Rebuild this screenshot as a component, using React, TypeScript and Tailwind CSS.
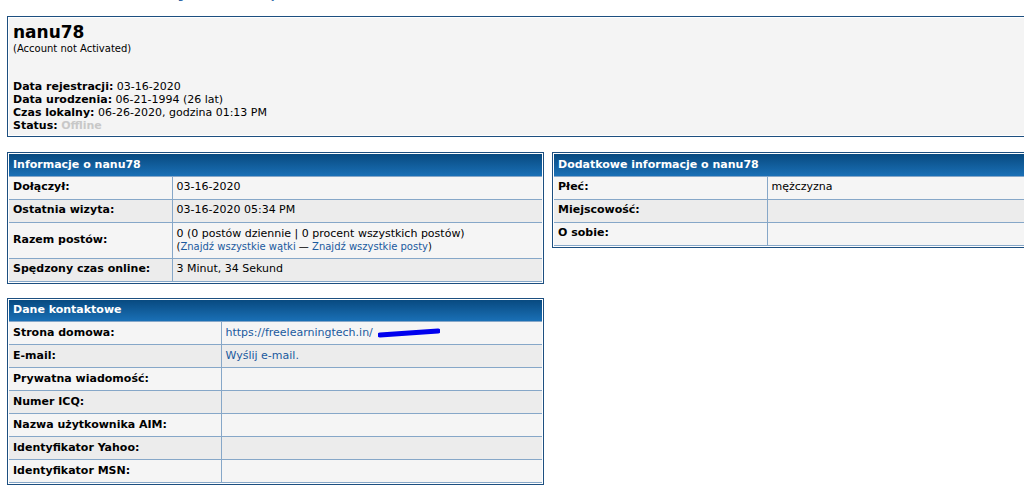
import React from 'react';

const font = { fontFamily: 'Tahoma, "DejaVu Sans", Verdana, sans-serif' };

interface Row {
  label: string;
  value?: React.ReactNode;
  tall?: boolean;
}

function InfoTable({ title, rows, labelWidth, className }: { title: string; rows: Row[]; labelWidth: string; className: string }) {
  return (
    <div className={`border border-[#1d4f80] p-px bg-white ${className}`}>
      <table className="w-full border-collapse text-[11px] text-black">
        <thead>
          <tr>
            <th
              colSpan={2}
              className="h-[22px] text-left font-bold text-white px-[4px] bg-gradient-to-b from-[#084a80] to-[#1a70b6] border-b border-[#86a7c8]"
            >
              {title}
            </th>
          </tr>
        </thead>
        <tbody>
          {rows.map((r, i) => (
            <tr key={r.label} className={i % 2 === 0 ? 'bg-[#f5f5f5]' : 'bg-[#ececec]'}>
              <td
                className={`${labelWidth} font-bold px-[4px] border-r border-b border-[#86a7c8] ${r.tall ? 'h-[36px]' : 'h-[23px]'}`}
              >
                {r.label}
              </td>
              <td className="px-[4px] border-b border-[#86a7c8]">{r.value}</td>
            </tr>
          ))}
        </tbody>
      </table>
    </div>
  );
}

export default function App() {
  const link = 'text-[#1a5a9e]';
  return (
    <div className="min-h-screen bg-white relative overflow-hidden" style={font}>
      {/* cut-off breadcrumb line */}
      <div className="h-[4px] overflow-hidden pl-[138px]">
        <div className={`mt-[-12px] text-[11px] leading-[15px] ${link}`}>Strona główna › Lista użytkowników › Profil: nanu78</div>
      </div>

      <div className="pl-[7px] pt-[12px] w-[1040px]">
        {/* profile header */}
        <div className="border border-[#1d4f80] p-px">
          <div className="bg-[#f4f4f4] h-[117px] px-[4px] pt-[4px] text-[11px] leading-[13px] text-black">
            <div className="text-[17px] font-bold leading-[20px]">nanu78</div>
            <div className="text-[10px] leading-[13px]">(Account not Activated)</div>
            <div className="mt-[25px]">
              <div><b>Data rejestracji:</b> 03-16-2020</div>
              <div><b>Data urodzenia:</b> 06-21-1994 (26 lat)</div>
              <div><b>Czas lokalny:</b> 06-26-2020, godzina 01:13 PM</div>
              <div><b>Status:</b> <b className="text-[#c8c8c8]">Offline</b></div>
            </div>
          </div>
        </div>

        <div className="flex items-start gap-[8px] mt-[15px]">
          <div className="flex flex-col gap-[14px] w-[537px]">
            <InfoTable
              title="Informacje o nanu78"
              labelWidth="w-[163px]"
              className="w-[537px]"
              rows={[
                { label: 'Dołączył:', value: '03-16-2020' },
                { label: 'Ostatnia wizyta:', value: '03-16-2020 05:34 PM' },
                {
                  label: 'Razem postów:',
                  tall: true,
                  value: (
                    <div className="leading-[13px]">
                      <div>0 (0 postów dziennie | 0 procent wszystkich postów)</div>
                      <div className="text-[10px]">
                        (<span className={link}>Znajdź wszystkie wątki</span> — <span className={link}>Znajdź wszystkie posty</span>)
                      </div>
                    </div>
                  ),
                },
                { label: 'Spędzony czas online:', value: '3 Minut, 34 Sekund' },
              ]}
            />
            <InfoTable
              title="Dane kontaktowe"
              labelWidth="w-[212px]"
              className="w-[537px]"
              rows={[
                {
                  label: 'Strona domowa:',
                  value: (
                    <span className="flex items-center">
                      <span className={link}>https://freelearningtech.in/</span>
                      <svg width="62" height="10" viewBox="0 0 62 10" className="ml-[5px]">
                        <path d="M2 7 L60 3" stroke="#0000ee" strokeWidth="5" strokeLinecap="round" />
                      </svg>
                    </span>
                  ),
                },
                { label: 'E-mail:', value: <span className={link}>Wyślij e-mail.</span> },
                { label: 'Prywatna wiadomość:' },
                { label: 'Numer ICQ:' },
                { label: 'Nazwa użytkownika AIM:' },
                { label: 'Identyfikator Yahoo:' },
                { label: 'Identyfikator MSN:' },
              ]}
            />
          </div>
          <InfoTable
            title="Dodatkowe informacje o nanu78"
            labelWidth="w-[213px]"
            className="w-[490px]"
            rows={[
              { label: 'Płeć:', value: 'mężczyzna' },
              { label: 'Miejscowość:' },
              { label: 'O sobie:' },
            ]}
          />
        </div>
      </div>
    </div>
  );
}
